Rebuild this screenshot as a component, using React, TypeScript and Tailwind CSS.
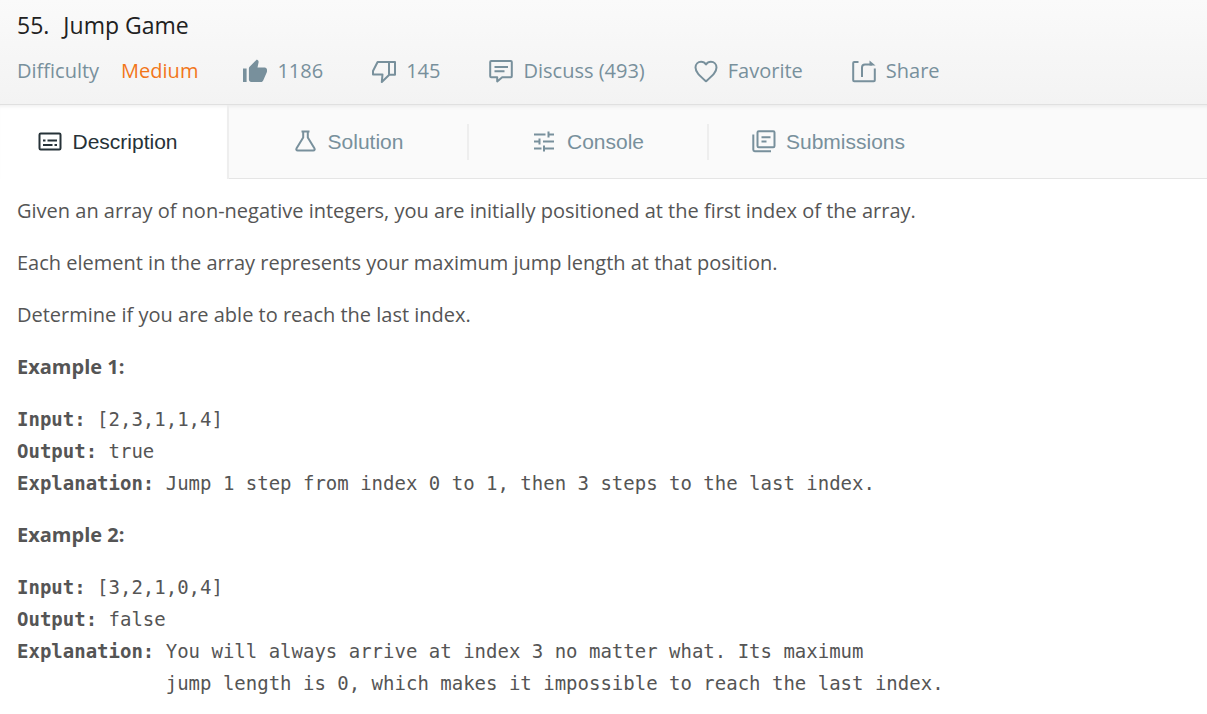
import type { ReactNode } from "react";

function Icon({ children, filled = false }: { children: ReactNode; filled?: boolean }) {
  return (
    <svg
      viewBox="0 0 26 26"
      className="size-[26px] shrink-0"
      fill={filled ? "currentColor" : "none"}
      stroke={filled ? "none" : "currentColor"}
      strokeWidth="2"
      strokeLinejoin="round"
      aria-hidden="true"
    >
      {children}
    </svg>
  );
}

const icons = {
  like: (
    <Icon filled>
      <path d="M1 10.500h3.600v13.400H1zM25 11.700c0-1.300-1-2.300-2.300-2.300h-7.200l1.100-5.200v-.4c0-.5-.2-.9-.5-1.200l-1.200-1.200-7.300 7.400c-.5.4-.7 1-.7 1.600v11.100c0 1.300 1 2.400 2.300 2.400h9.900c1 0 1.800-.6 2.100-1.500l3.600-8.200c.1-.3.2-.6.2-.9z" />
    </Icon>
  ),
  dislike: (
    <Icon>
      <path d="M18 4H6.600L2 13v3.500h9.500L10.800 24 18 17V4h6v12.700h-6" />
    </Icon>
  ),
  discuss: (
    <Icon>
      <path d="M3.200 3h19.600a1 1 0 0 1 1 1v14.200a1 1 0 0 1-1 1h-8.600L9.200 23.400v-4.200h-6a1 1 0 0 1-1-1V4a1 1 0 0 1 1-1z" />
      <path d="M6.500 9h13.500M6.500 13.200h10" />
    </Icon>
  ),
  favorite: (
    <Icon>
      <path d="M13 23.300C6.500 17.600 2.500 14.200 2.500 9.600c0-3.400 2.500-5.800 5.600-5.800 1.900 0 3.700.9 4.900 2.700 1.200-1.800 3-2.700 4.900-2.700 3.100 0 5.600 2.400 5.600 5.800 0 4.600-4 8-10.500 13.700z" />
    </Icon>
  ),
  share: (
    <Icon>
      <path d="M7.500 4H3.200a1 1 0 0 0-1 1v17.200a1 1 0 0 0 1 1h19.600a1 1 0 0 0 1-1V10.500" />
      <path d="M11 19V9.500a3 3 0 0 1 3-3h7" />
      <path d="M18.500 2.500 24.500 7.500H18.500z" fill="currentColor" stroke="none" />
    </Icon>
  ),
  description: (
    <Icon>
      <rect x="2.500" y="4.500" width="21" height="16" rx="1.200" />
      <path d="M6 11.500h2.500M10.500 11.500H20M6 16h9.500M17.500 16H20" />
    </Icon>
  ),
  solution: (
    <Icon>
      <path d="M8.500 2.500h8M10.200 2.500v6L3.600 19.200c-.8 1.300-.2 2.300 1.200 2.300h15.400c1.400 0 2-1 1.200-2.300L14.800 8.500v-6" />
    </Icon>
  ),
  console: (
    <Icon>
      <path d="M2 5.500h11.500M16.500 5.500H22M16.500 2.500v6M2 12.500h5M7.500 9.500v6M11 12.500h11M2 19.500h7.500M12.500 19.500H22M12 16.500v6" />
    </Icon>
  ),
  submissions: (
    <Icon>
      <rect x="6.500" y="2.200" width="17" height="16" rx="1.200" />
      <path d="M2.300 5.500v15.300a1.400 1.400 0 0 0 1.400 1.400H20" />
      <path d="M10.500 8.200h9M10.500 12.500h5" />
    </Icon>
  ),
};

const actions = [
  { label: "1186", icon: icons.like },
  { label: "145", icon: icons.dislike },
  { label: "Discuss (493)", icon: icons.discuss },
  { label: "Favorite", icon: icons.favorite },
  { label: "Share", icon: icons.share },
];

const tabs = [
  { label: "Solution", icon: icons.solution, divider: true },
  { label: "Console", icon: icons.console, divider: true },
  { label: "Submissions", icon: icons.submissions, divider: false },
];

const codeClass = "mb-5 font-['DejaVu_Sans_Mono',monospace] text-[19px] leading-8";

export default function App() {
  return (
    <div className="min-h-screen bg-white font-['Open_Sans',sans-serif] text-[20px] text-[#555]">
      <header className="border-b border-[#e0e0e0] bg-linear-to-b from-[#fafafa] to-[#f3f3f3] px-[17px] pt-[7px] pb-[18px]">
        <h1 className="flex gap-[14px] text-[23px] leading-9 text-[#212121]">
          <span>55.</span>
          <span>Jump Game</span>
        </h1>
        <div className="mt-3 flex items-center gap-11 leading-[31px] whitespace-nowrap text-[#78909c]">
          <div className="flex gap-[22px]">
            <span>Difficulty</span>
            <span className="text-[#f2761a]">Medium</span>
          </div>
          <div className="flex gap-12">
            {actions.map((action) => (
              <button key={action.label} type="button" className="flex items-center gap-[9px]">
                {action.icon}
                {action.label}
              </button>
            ))}
          </div>
        </div>
      </header>

      <nav
        role="tablist"
        className="flex h-[74px] bg-[#fafafa] font-['Liberation_Sans',sans-serif] text-[21px] text-[#78909c] shadow-[inset_0_4px_4px_-3px_rgba(0,0,0,0.08)]"
      >
        <button
          type="button"
          role="tab"
          aria-selected="true"
          className="flex w-[229px] items-center justify-center gap-[9px] border-r-2 border-[#eee] bg-white pr-3 text-[#263238] shadow-[inset_0_4px_4px_-3px_rgba(0,0,0,0.08)]"
        >
          {icons.description}
          Description
        </button>
        <div className="flex flex-1 items-center border-b border-[#e5e5e5]">
          {tabs.map((tab) => (
            <button
              key={tab.label}
              type="button"
              role="tab"
              aria-selected="false"
              className={
                tab.divider
                  ? "flex h-9 w-60 items-center justify-center gap-[9px] border-r-2 border-[#eee]"
                  : "flex h-9 w-60 items-center justify-center gap-[9px] pr-[2px]"
              }
            >
              {tab.icon}
              {tab.label}
            </button>
          ))}
        </div>
      </nav>

      <main className="px-[17px] pt-4 leading-8">
        <p className="mb-5">
          Given an array of non-negative integers, you are initially positioned at the first index of the array.
        </p>
        <p className="mb-5">Each element in the array represents your maximum jump length at that position.</p>
        <p className="mb-5">Determine if you are able to reach the last index.</p>
        <h2 className="mb-5 font-bold">Example 1:</h2>
        <pre className={codeClass}>
          <b>Input:</b> [2,3,1,1,4]{"\n"}
          <b>Output:</b> true{"\n"}
          <b>Explanation:</b> Jump 1 step from index 0 to 1, then 3 steps to the last index.
        </pre>
        <h2 className="mb-5 font-bold">Example 2:</h2>
        <pre className={codeClass}>
          <b>Input:</b> [3,2,1,0,4]{"\n"}
          <b>Output:</b> false{"\n"}
          <b>Explanation:</b> You will always arrive at index 3 no matter what. Its maximum{"\n"}
          {"             "}jump length is 0, which makes it impossible to reach the last index.
        </pre>
      </main>
    </div>
  );
}
